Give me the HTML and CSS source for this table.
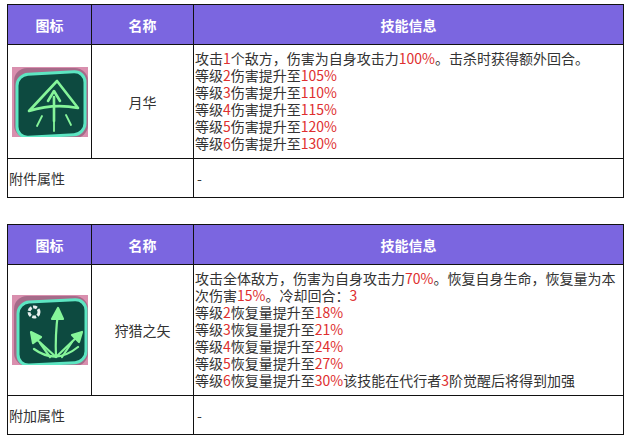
FILE: index.html
```html
<!DOCTYPE html>
<html lang="zh">
<head>
<meta charset="utf-8">
<link rel="stylesheet" href="styles.css">
</head>
<body>
<div class="page">
<table class="skill">
  <colgroup><col class="c1"><col class="c2"><col class="c3"></colgroup>
  <tr class="head"><th>图标</th><th>名称</th><th>技能信息</th></tr>
  <tr class="main">
    <td class="icon">
      <svg width="76" height="70" viewBox="0 0 76 70">
        <rect width="76" height="70" fill="#d98fae"/>
        <rect x="2" y="1" width="74" height="70" rx="13" fill="#7a4f6c" opacity="0.55"/>
        <g transform="skewY(-3) translate(0,3)">
          <rect x="5" y="5" width="68" height="63" rx="11" fill="#0d4a40" stroke="#5de6c2" stroke-width="3"/>
        </g>
        <g fill="none" stroke="#86f59a" stroke-width="2.6" stroke-linecap="round" stroke-linejoin="round">
          <path d="M45 14 L17 44 Q42 36 66 41 Z"/>
          <path d="M42 54 L42 30"/>
          <path d="M36 34 L42 24 L48 34"/>
          <path d="M30 49 L25 59" stroke-width="1.8"/>
          <path d="M42 55 L42 64" stroke-width="1.8"/>
          <path d="M54 48 L59 58" stroke-width="1.8"/>
        </g>
      </svg>
    </td>
    <td class="name">月华</td>
    <td class="desc">攻击<em>1</em>个敌方，伤害为自身攻击力<em>100%</em>。击杀时获得额外回合。<br>等级<em>2</em>伤害提升至<em>105%</em><br>等级<em>3</em>伤害提升至<em>110%</em><br>等级<em>4</em>伤害提升至<em>115%</em><br>等级<em>5</em>伤害提升至<em>120%</em><br>等级<em>6</em>伤害提升至<em>130%</em></td>
  </tr>
  <tr class="foot"><td colspan="2">附件属性</td><td class="dash">-</td></tr>
</table>

<table class="skill">
  <colgroup><col class="c1"><col class="c2"><col class="c3"></colgroup>
  <tr class="head"><th>图标</th><th>名称</th><th>技能信息</th></tr>
  <tr class="main">
    <td class="icon">
      <svg width="76" height="70" viewBox="0 0 76 70">
        <rect width="76" height="70" fill="#d98fae"/>
        <rect x="2" y="1" width="74" height="70" rx="13" fill="#7a4f6c" opacity="0.55"/>
        <g transform="skewY(-3) translate(0,3)">
          <rect x="6" y="5" width="68" height="63" rx="11" fill="#0d4a40" stroke="#5de6c2" stroke-width="3"/>
        </g>
        <circle cx="22" cy="17" r="5" fill="none" stroke="#e8f0ee" stroke-width="3" stroke-dasharray="4 1.5"/>
        <g fill="none" stroke="#86f59a" stroke-width="2.2" stroke-linecap="round" stroke-linejoin="round">
          <path d="M44 62 Q43 40 46 18"/>
          <path d="M40 24 L46 13 L51 24 Z" fill="#86f59a"/>
          <path d="M44 62 L22 42"/>
          <path d="M21 48 L19 37 L29 42 Z" fill="#86f59a"/>
          <path d="M44 62 L67 40"/>
          <path d="M60 40 L70 37 L67 47 Z" fill="#86f59a"/>
          <path d="M22 54 Q44 70 66 52"/>
          <path d="M28 48 L38 62"/>
          <path d="M60 47 L50 62"/>
        </g>
      </svg>
    </td>
    <td class="name">狩猎之矢</td>
    <td class="desc">攻击全体敌方，伤害为自身攻击力<em>70%</em>。恢复自身生命，恢复量为本次伤害<em>15%</em>。冷却回合：<em>3</em><br>等级<em>2</em>恢复量提升至<em>18%</em><br>等级<em>3</em>恢复量提升至<em>21%</em><br>等级<em>4</em>恢复量提升至<em>24%</em><br>等级<em>5</em>恢复量提升至<em>27%</em><br>等级<em>6</em>恢复量提升至<em>30%</em>该技能在代行者<em>3</em>阶觉醒后将得到加强</td>
  </tr>
  <tr class="foot"><td colspan="2">附加属性</td><td class="dash">-</td></tr>
</table>
</div>
</body>
</html>
```
FILE: styles.css
```css
html, body {
  margin: 0;
  padding: 0;
  background: #fff;
}
.page {
  padding: 4px 7px;
  display: flex;
  flex-direction: column;
  gap: 26px;
  font-family: "Noto Sans CJK SC", "Microsoft YaHei", sans-serif;
  font-size: 14px;
  color: #333;
}
.skill {
  width: 617px;
  table-layout: fixed;
  border-collapse: collapse;
  border: 1px solid #111;
}
.c1 { width: 84px; }
.c2 { width: 102px; }
.skill th, .skill td {
  border: 1px solid #111;
  padding: 0;
}
.head th {
  background: #7b66e0;
  color: #fff;
  font-weight: bold;
  font-size: 14px;
  height: 39px;
  text-align: center;
}
.icon {
  text-align: center;
  vertical-align: middle;
}
.icon svg {
  display: block;
  margin: 0 auto;
}
.name {
  text-align: center;
  vertical-align: middle;
}
.desc {
  line-height: 17px;
  padding: 5px 1px 6px 1px !important;
  vertical-align: middle;
}
.desc em {
  font-style: normal;
  color: #de2f2f;
}
.foot td {
  height: 38px;
  padding-left: 1px;
  vertical-align: middle;
}
.foot .dash {
  padding-left: 3px;
}
```
